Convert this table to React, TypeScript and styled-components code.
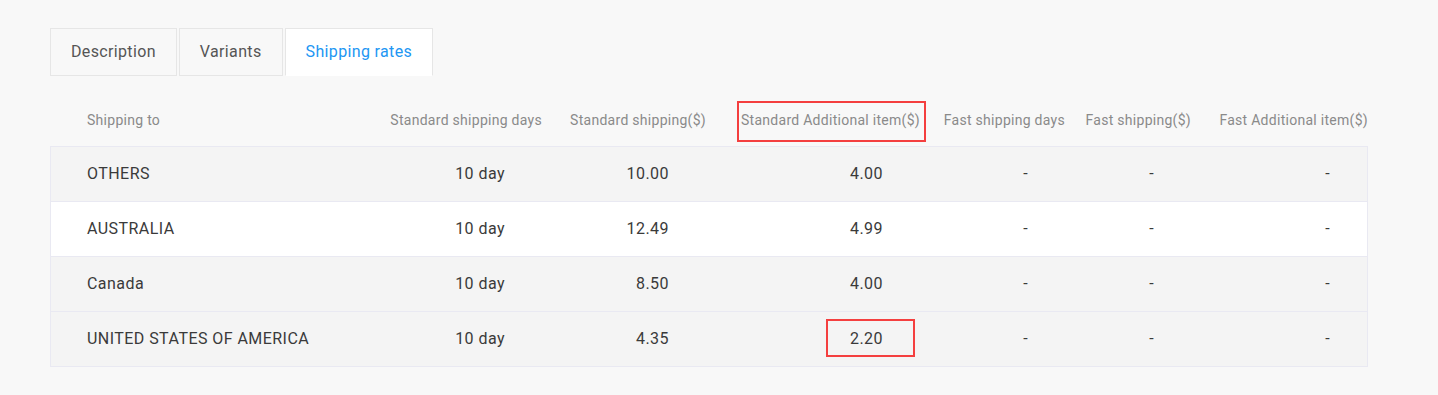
import React from 'react';
import styled, { createGlobalStyle } from 'styled-components';

const GlobalStyle = createGlobalStyle`
  html, body {
    margin: 0;
    padding: 0;
    background: #f8f8f8;
    font-family: Roboto, 'Liberation Sans', Arial, sans-serif;
  }
`;

const Page = styled.div`
  padding: 28px 70px 0 50px;
  width: 1318px;
`;

const Tabs = styled.div`
  display: flex;
  gap: 2px;
`;

const Tab = styled.div<{ $active?: boolean }>`
  height: 44px;
  padding: 0 20px 2px;
  display: flex;
  align-items: center;
  font-size: 16px;
  letter-spacing: 0.35px;
  color: ${p => (p.$active ? '#2196f3' : '#555')};
  background: ${p => (p.$active ? '#fff' : '#f8f8f8')};
  border: 1px solid #e6e6e6;
  border-bottom-color: ${p => (p.$active ? '#fff' : '#e6e6e6')};
`;

const Table = styled.div`
  margin-top: 19px;
`;

const cols = '320px 172px 164px 214px 145px 126px 177px';

const HeadRow = styled.div`
  display: grid;
  grid-template-columns: ${cols};
  height: 49px;
  padding-bottom: 2px;
  align-items: center;
  border-bottom: 1px solid #e9e9f2;
`;

const HeadCell = styled.div<{ $left?: boolean }>`
  font-size: 14px;
  line-height: 16px;
  letter-spacing: 0.28px;
  color: #8a8a8a;
  text-align: ${p => (p.$left ? 'left' : 'right')};
  padding-left: ${p => (p.$left ? '37px' : '0')};
  white-space: nowrap;
`;

const Body = styled.div`
  border: 1px solid #e9e9f2;
  border-top: none;
`;

const Row = styled.div<{ $white?: boolean }>`
  display: grid;
  grid-template-columns: 319px 172px 164px 214px 145px 126px 176px;
  height: 54px;
  align-items: center;
  background: ${p => (p.$white ? '#fff' : '#f4f4f4')};
  & + & {
    border-top: 1px solid #e9e9f2;
  }
`;

const Cell = styled.div<{ $left?: boolean }>`
  font-size: 16px;
  line-height: 20px;
  letter-spacing: 0.45px;
  color: #3a3a3a;
  text-align: ${p => (p.$left ? 'left' : 'right')};
  padding: ${p => (p.$left ? '0 0 0 36px' : '0 37px 0 0')};
  white-space: nowrap;
`;

const Mark = styled.span<{ $t: number; $r: number; $b: number; $l: number }>`
  position: relative;
  &::after {
    content: '';
    position: absolute;
    top: ${p => p.$t}px;
    right: ${p => p.$r}px;
    bottom: ${p => p.$b}px;
    left: ${p => p.$l}px;
    border: 2px solid #f43f3f;
    pointer-events: none;
  }
`;

const rows = [
  { to: 'OTHERS', days: '10 day', std: '10.00', add: '4.00', white: false },
  { to: 'AUSTRALIA', days: '10 day', std: '12.49', add: '4.99', white: true },
  { to: 'Canada', days: '10 day', std: '8.50', add: '4.00', white: false },
  { to: 'UNITED STATES OF AMERICA', days: '10 day', std: '4.35', add: '2.20', white: false, mark: true },
];

function App() {
  return (
    <Page>
      <GlobalStyle />
      <Tabs>
        <Tab>Description</Tab>
        <Tab>Variants</Tab>
        <Tab $active>Shipping rates</Tab>
      </Tabs>
      <Table>
        <HeadRow>
          <HeadCell $left>Shipping to</HeadCell>
          <HeadCell>Standard shipping days</HeadCell>
          <HeadCell>Standard shipping($)</HeadCell>
          <HeadCell>
            <Mark $t={-11} $r={-6} $b={-14} $l={-4}>Standard Additional item($)</Mark>
          </HeadCell>
          <HeadCell>Fast shipping days</HeadCell>
          <HeadCell>Fast shipping($)</HeadCell>
          <HeadCell>Fast Additional item($)</HeadCell>
        </HeadRow>
        <Body>
          {rows.map(r => (
            <Row key={r.to} $white={r.white}>
              <Cell $left>{r.to}</Cell>
              <Cell>{r.days}</Cell>
              <Cell>{r.std}</Cell>
              <Cell>
                {r.mark ? (
                  <Mark $t={-10} $r={-32} $b={-9} $l={-24}>{r.add}</Mark>
                ) : (
                  r.add
                )}
              </Cell>
              <Cell>-</Cell>
              <Cell>-</Cell>
              <Cell>-</Cell>
            </Row>
          ))}
        </Body>
      </Table>
    </Page>
  );
}

export default App;
